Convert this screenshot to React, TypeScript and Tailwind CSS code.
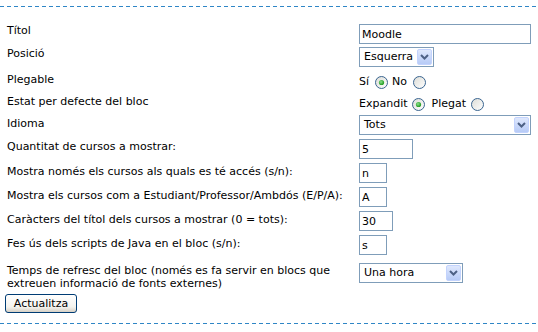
import React from "react";

function Dashed() {
  return (
    <div className="h-px w-full bg-[repeating-linear-gradient(to_right,#2f86c6_0px,#2f86c6_4px,transparent_4px,transparent_7px)]" />
  );
}

function TextBox({ value, w }: { value: string; w: string }) {
  return (
    <input
      readOnly
      defaultValue={value}
      className={`h-[20px] border border-[#7f9db9] bg-white px-[2px] text-[11px] leading-[18px] text-black outline-none ${w}`}
    />
  );
}

function Chevron() {
  return (
    <span className="ml-auto mr-[1px] flex h-[16px] w-[15px] items-center justify-center rounded-[2px] border border-[#c3d3fd] bg-[linear-gradient(to_bottom,#dfe8fd,#b7cbf7)]">
      <svg width="9" height="6" viewBox="0 0 9 6">
        <path d="M1 1 L4.5 4.5 L8 1" fill="none" stroke="#4d6185" strokeWidth="2" />
      </svg>
    </span>
  );
}

function SelectBox({ value, w }: { value: string; w: string }) {
  return (
    <div className={`flex h-[20px] items-center border border-[#7f9db9] bg-white pl-[4px] ${w}`}>
      <span className="leading-[14px]">{value}</span>
      <Chevron />
    </div>
  );
}

function Radio({ checked }: { checked?: boolean }) {
  return (
    <svg width="13" height="13" viewBox="0 0 13 13" className="shrink-0">
      <defs>
        <linearGradient id={checked ? "rgc" : "rgu"} x1="0" y1="0" x2="1" y2="1">
          <stop offset="0" stopColor="#dcdcd6" />
          <stop offset="1" stopColor="#ffffff" />
        </linearGradient>
        <radialGradient id="dot" cx="0.4" cy="0.4" r="0.6">
          <stop offset="0" stopColor="#8de08d" />
          <stop offset="1" stopColor="#1e9a1e" />
        </radialGradient>
      </defs>
      <circle cx="6.5" cy="6.5" r="6" fill={`url(#${checked ? "rgc" : "rgu"})`} stroke="#3a6590" strokeWidth="1" />
      {checked && <circle cx="6.5" cy="6.5" r="2.6" fill="url(#dot)" />}
    </svg>
  );
}

function Row({
  h,
  label,
  lpt,
  children,
}: {
  h: string;
  label: React.ReactNode;
  lpt: string;
  children: React.ReactNode;
}) {
  return (
    <div className={`flex items-start ${h}`}>
      <div className={`w-[352px] shrink-0 leading-[14px] ${lpt}`}>{label}</div>
      <div className="flex-1">{children}</div>
    </div>
  );
}

export default function App() {
  return (
    <div className="h-[332px] w-[538px] overflow-hidden bg-white font-[family-name:'DejaVu_Sans',sans-serif] text-[11px] text-black">
      <div className="h-[6px]" />
      <Dashed />
      <div className="mt-[17px] flex flex-col pl-[7px]">
        <Row h="h-[23px]" lpt="pt-0" label="Títol">
          <TextBox value="Moodle" w="w-[172px]" />
        </Row>
        <Row h="h-[24px]" lpt="pt-0" label="Posició">
          <SelectBox value="Esquerra" w="w-[75px]" />
        </Row>
        <Row h="h-[22px]" lpt="pt-[2px]" label="Plegable">
          <div className="flex items-center pt-[4px] leading-[14px]">
            <span>Sí</span>
            <span className="ml-[6px] mr-[4px] flex"><Radio checked /></span>
            <span>No</span>
            <span className="ml-[6px] flex"><Radio /></span>
          </div>
        </Row>
        <Row h="h-[22px]" lpt="pt-[2px]" label="Estat per defecte del bloc">
          <div className="flex items-center pt-[4px] leading-[14px]">
            <span>Expandit</span>
            <span className="ml-[4px] mr-[7px] flex"><Radio checked /></span>
            <span>Plegat</span>
            <span className="ml-[5px] flex"><Radio /></span>
          </div>
        </Row>
        <Row h="h-[24px]" lpt="pt-[2px]" label="Idioma">
          <SelectBox value="Tots" w="w-[172px]" />
        </Row>
        <Row h="h-[24px]" lpt="pt-[1px]" label="Quantitat de cursos a mostrar:">
          <TextBox value="5" w="w-[54px]" />
        </Row>
        <Row h="h-[24px]" lpt="pt-[2px]" label="Mostra només els cursos als quals es té accés (s/n):">
          <TextBox value="n" w="w-[28px]" />
        </Row>
        <Row h="h-[24px]" lpt="pt-[2px]" label="Mostra els cursos com a Estudiant/Professor/Ambdós (E/P/A):">
          <TextBox value="A" w="w-[28px]" />
        </Row>
        <Row h="h-[24px]" lpt="pt-[2px]" label="Caràcters del títol dels cursos a mostrar (0 = tots):">
          <TextBox value="30" w="w-[34px]" />
        </Row>
        <Row h="h-[28px]" lpt="pt-[2px]" label="Fes ús dels scripts de Java en el bloc (s/n):">
          <TextBox value="s" w="w-[28px]" />
        </Row>
        <div className="flex h-[31px] items-start">
          <div className="w-[352px] shrink-0 pt-[1px] leading-[13px]">
            Temps de refresc del bloc (només es fa servir en blocs que
            <br />
            extreuen informació de fonts externes)
          </div>
          <SelectBox value="Una hora" w="w-[104px]" />
        </div>
        <div className="-ml-[2px]">
          <button className="h-[19px] w-[72px] rounded-[3px] border border-[#003c74] bg-[linear-gradient(to_bottom,#ffffff,#f4f3ee_70%,#d6d0c5)] text-[11px] leading-[15px] text-black">
            Actualitza
          </button>
        </div>
      </div>
      <div className="mt-[10px]">
        <Dashed />
      </div>
    </div>
  );
}
